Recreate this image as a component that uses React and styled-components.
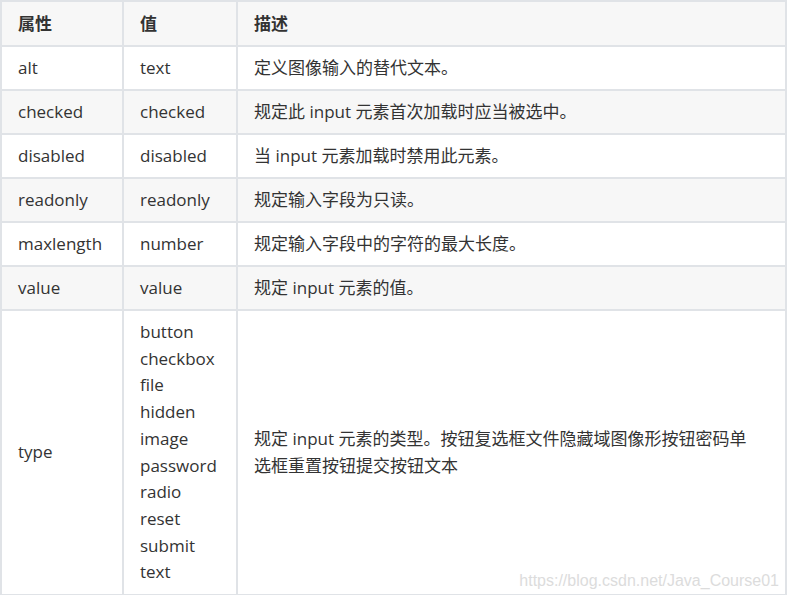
import React from 'react';
import styled, { createGlobalStyle } from 'styled-components';

const GlobalStyle = createGlobalStyle`
  html, body {
    margin: 0;
    padding: 0;
    background: #fff;
  }
`;

const Page = styled.div`
  position: relative;
  width: 787px;
  font-family: "Open Sans", "Noto Sans CJK SC", sans-serif;
  font-size: 17px;
  color: #333;
`;

const Table = styled.table`
  width: 787px;
  border-collapse: collapse;
  table-layout: fixed;
`;

const Row = styled.tr`
  background: ${p => (p.$shade ? '#f7f7f7' : '#fff')};
`;

const Head = styled.th`
  text-align: left;
  font-weight: 700;
  padding: 8.5px 17px 8px 16px;
  line-height: 26.67px;
  border: 2px solid #e0e3e7;
`;

const Cell = styled.td`
  padding: 7.7px ${p => (p.$wide ? '34px' : '17px')} 7.7px 16px;
  line-height: 26.67px;
  border: 2px solid #e0e3e7;
  vertical-align: middle;
`;

const Watermark = styled.span`
  position: absolute;
  right: 8px;
  bottom: 6px;
  font-family: "Liberation Sans", Arial, sans-serif;
  font-size: 16px;
  color: #dcdcdc;
`;

const rows = [
  ['alt', 'text', '定义图像输入的替代文本。'],
  ['checked', 'checked', '规定此 input 元素首次加载时应当被选中。'],
  ['disabled', 'disabled', '当 input 元素加载时禁用此元素。'],
  ['readonly', 'readonly', '规定输入字段为只读。'],
  ['maxlength', 'number', '规定输入字段中的字符的最大长度。'],
  ['value', 'value', '规定 input 元素的值。'],
];

const types = ['button', 'checkbox', 'file', 'hidden', 'image', 'password', 'radio', 'reset', 'submit', 'text'];

export default function App() {
  return (
    <Page>
      <GlobalStyle />
      <Table>
        <colgroup>
          <col style={{ width: 122 }} />
          <col style={{ width: 114 }} />
          <col />
        </colgroup>
        <thead>
          <Row $shade>
            <Head>属性</Head>
            <Head>值</Head>
            <Head>描述</Head>
          </Row>
        </thead>
        <tbody>
          {rows.map((r, i) => (
            <Row key={r[0]} $shade={i % 2 === 1}>
              <Cell>{r[0]}</Cell>
              <Cell>{r[1]}</Cell>
              <Cell $wide>{r[2]}</Cell>
            </Row>
          ))}
          <Row>
            <Cell>type</Cell>
            <Cell>
              {types.map((t, i) => (
                <React.Fragment key={t}>
                  {t}
                  {i < types.length - 1 && <br />}
                </React.Fragment>
              ))}
            </Cell>
            <Cell $wide>规定 input 元素的类型。按钮复选框文件隐藏域图像形按钮密码单选框重置按钮提交按钮文本</Cell>
          </Row>
        </tbody>
      </Table>
      <Watermark>https://blog.csdn.net/Java_Course01</Watermark>
    </Page>
  );
}
